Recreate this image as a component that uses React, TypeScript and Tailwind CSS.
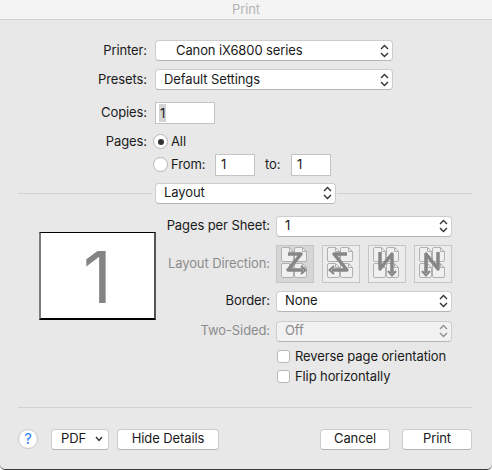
import type { ReactNode } from "react";

function Carets({ muted }: { muted?: boolean }) {
  return (
    <svg width="9" height="14" viewBox="0 0 9 14" fill="none" stroke={muted ? "#8e8e8e" : "#333"} strokeWidth="1.4" className="shrink-0">
      <path d="M1 5 L4.5 1.5 L8 5" />
      <path d="M1 9 L4.5 12.5 L8 9" />
    </svg>
  );
}

function Select({ value, className, pad, disabled }: { value: string; className: string; pad: string; disabled?: boolean }) {
  return (
    <div
      className={`flex items-center justify-between h-[21px] rounded-[4px] border border-[#cdcdcd] border-b-[#b5b5b5] pr-[3px] ${pad} ${
        disabled ? "bg-[#f2f2f2] text-[#8c8c8c]" : "bg-white text-[#1a1a1a]"
      } ${className}`}
    >
      <span>{value}</span>
      <Carets muted={disabled} />
    </div>
  );
}

function Row({ label, muted, className, children }: { label: string; muted?: boolean; className?: string; children: ReactNode }) {
  return (
    <div className={`flex items-center ${className ?? ""}`}>
      <div className={`w-[147px] text-right ${muted ? "text-[#8c8c8c]" : "text-[#1a1a1a]"}`}>{label}</div>
      <div className="ml-[8px] flex items-center">{children}</div>
    </div>
  );
}

function NumberBox({ value, className }: { value: string; className: string }) {
  return <div className={`h-[22px] bg-white border border-[#c4c4c4] flex items-center pl-[5px] text-[#1a1a1a] ${className}`}>{value}</div>;
}

function Radio({ on }: { on?: boolean }) {
  return (
    <div className="w-[15px] h-[15px] rounded-full bg-white border border-[#b4b4b4] flex items-center justify-center shrink-0">
      {on && <div className="w-[6px] h-[6px] rounded-full bg-[#333]" />}
    </div>
  );
}

function Page({ x, y }: { x: number; y: number }) {
  return (
    <g stroke="#b0b0b0" fill="#f0f0f0" strokeWidth="1">
      <path d={`M${x + 1.5} ${y} H${x + 8} L${x + 12} ${y + 4} V${y + 12.5} Q${x + 12} ${y + 14} ${x + 10.5} ${y + 14} H${x + 1.5} Q${x} ${y + 14} ${x} ${y + 12.5} V${y + 1.5} Q${x} ${y} ${x + 1.5} ${y} Z`} />
      <path d={`M${x + 8} ${y} V${y + 4} H${x + 12}`} fill="none" />
    </g>
  );
}

function DirectionButton({ line, head, active }: { line: string; head: string; active?: boolean }) {
  return (
    <div className={`w-[38px] h-[38px] border border-[#c6c6c6] ${active ? "bg-[#d6d6d6]" : "bg-[#ececec]"}`}>
      <svg width="36" height="36" viewBox="0 0 36 36" fill="none">
        <Page x={4.5} y={1.5} />
        <Page x={17.5} y={1.5} />
        <Page x={4.5} y={17.5} />
        <Page x={17.5} y={17.5} />
        <path d={line} stroke="#868686" strokeWidth="3.5" strokeLinejoin="round" />
        <path d={head} stroke="#868686" strokeWidth="2" />
      </svg>
    </div>
  );
}

function Check({ label }: { label: string }) {
  return (
    <div className="flex items-center h-[20px]">
      <div className="w-[13px] h-[13px] rounded-[3px] bg-white border border-[#b9b9b9] shrink-0" />
      <span className="ml-[5px] text-[#1a1a1a]">{label}</span>
    </div>
  );
}

function Button({ label, className }: { label: string; className: string }) {
  return (
    <div className={`h-[21px] bg-white rounded-[4px] border border-[#cdcdcd] border-b-[#b5b5b5] flex items-center justify-center text-[#1a1a1a] ${className}`}>
      {label}
    </div>
  );
}

export default function App() {
  return (
    <div className="w-[492px] h-[470px] bg-[#e8e8e8] flex flex-col rounded-b-[5px] border-b border-[#3a3a3a] text-[13px] tracking-[-0.1px] overflow-hidden" style={{ fontFamily: "Inter, 'Liberation Sans', sans-serif" }}>
      <div className="h-[20px] shrink-0 bg-[#f4f4f4] border-b border-[#d2d2d2] flex items-center justify-center text-[#b4b4b4]">Print</div>

      <Row label="Printer:" className="mt-[20px]">
        <Select value="Canon iX6800 series" pad="pl-[20px]" className="w-[238px]" />
      </Row>
      <Row label="Presets:" className="mt-[8px]">
        <Select value="Default Settings" pad="pl-[8px]" className="w-[238px]" />
      </Row>
      <Row label="Copies:" className="mt-[12px]">
        <div className="w-[60px] h-[22px] bg-white border border-[#c4c4c4] flex items-center pl-[3px] text-[#1a1a1a]">
          <span className="bg-[#d4d4d4] px-[1px] leading-[18px]">1</span>
        </div>
      </Row>
      <div className="flex items-center mt-[8px]">
        <div className="w-[147px] text-right text-[#1a1a1a]">Pages:</div>
        <div className="ml-[6px] flex items-center">
          <Radio on />
          <span className="ml-[3px] text-[#1a1a1a]">All</span>
        </div>
      </div>
      <div className="flex items-center mt-[2px] pl-[153px]">
        <Radio />
        <span className="ml-[3px] w-[44px] text-[#1a1a1a]">From:</span>
        <NumberBox value="1" className="w-[40px]" />
        <span className="ml-[10px] w-[26px] text-[#1a1a1a]">to:</span>
        <NumberBox value="1" className="w-[40px]" />
      </div>

      <div className="flex items-center mt-[7px] pl-[18px] pr-[20px]">
        <div className="w-[134px] h-px bg-[#d2d2d2]" />
        <Select value="Layout" pad="pl-[8px]" className="ml-[3px] w-[181px]" />
        <div className="flex-1 ml-[1px] h-px bg-[#d2d2d2]" />
      </div>

      <div className="flex mt-[12px] pl-[39px]">
        <div className="mt-[16px] w-[117px] h-[88px] pt-[4px] bg-white border-t border-t-black border-l-2 border-l-[#7c7c7c] border-r-2 border-r-[#555] border-b-2 border-b-black flex items-center justify-center text-[#848484] text-[71px] font-normal leading-none">
          1
        </div>
        <div className="flex flex-col w-[295px] ml-[1px]">
          <div className="flex items-center">
            <div className="w-[113px] text-right text-[#1a1a1a]">Pages per Sheet:</div>
            <Select value="1" pad="pl-[8px]" className="ml-[6px] w-[176px]" />
          </div>
          <div className="flex items-center mt-[8px]">
            <div className="w-[113px] text-right text-[#8c8c8c]">Layout Direction:</div>
            <div className="ml-[6px] flex gap-[8px]">
              <DirectionButton active line="M11 8 H24 L11 24 H26" head="M24 20 L28.5 24 L24 28" />
              <DirectionButton line="M24 8 H11 L24 24 H9" head="M11 20 L6.5 24 L11 28" />
              <DirectionButton line="M11 6 V23 L23 8 V27" head="M19 25 L23 29.5 L27 25" />
              <DirectionButton line="M23 6 V23 L11 8 V27" head="M7 25 L11 29.5 L15 25" />
            </div>
          </div>
          <div className="flex items-center mt-[8px]">
            <div className="w-[113px] text-right text-[#1a1a1a]">Border:</div>
            <Select value="None" pad="pl-[8px]" className="ml-[6px] w-[176px]" />
          </div>
          <div className="flex items-center mt-[9px]">
            <div className="w-[113px] text-right text-[#8c8c8c]">Two-Sided:</div>
            <Select value="Off" pad="pl-[8px]" className="ml-[6px] w-[176px]" disabled />
          </div>
          <div className="ml-[120px] mt-[5px] flex flex-col">
            <Check label="Reverse page orientation" />
            <Check label="Flip horizontally" />
          </div>
        </div>
      </div>

      <div className="ml-[18px] mr-[20px] mt-[20px] h-px bg-[#d2d2d2]" />

      <div className="flex items-center mt-[21px] pl-[18px] pr-[20px]">
        <div className="w-[20px] h-[20px] rounded-full bg-white border border-[#c8c8c8] flex items-center justify-center text-[#2a7ff0] text-[15px]">?</div>
        <div className="ml-[13px] w-[58px] h-[21px] bg-white rounded-[4px] border border-[#cdcdcd] border-b-[#b5b5b5] flex items-center justify-between pl-[9px] pr-[5px] text-[#1a1a1a]">
          <span>PDF</span>
          <svg width="8" height="6" viewBox="0 0 8 6" fill="none" stroke="#333" strokeWidth="1.4">
            <path d="M1 1 L4 4.5 L7 1" />
          </svg>
        </div>
        <Button label="Hide Details" className="ml-[8px] w-[102px]" />
        <Button label="Cancel" className="ml-auto w-[70px]" />
        <Button label="Print" className="ml-[12px] w-[70px]" />
      </div>
    </div>
  );
}
